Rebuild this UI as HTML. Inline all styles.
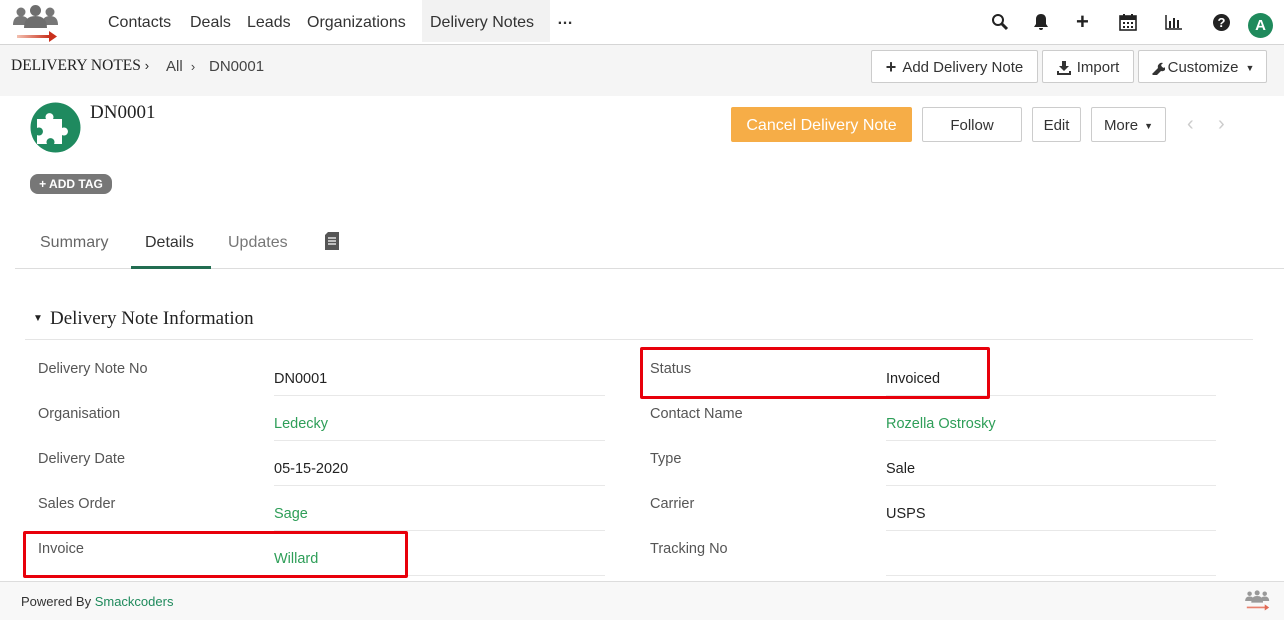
<!DOCTYPE html>
<html><head><meta charset="utf-8"><style>
*{margin:0;padding:0;box-sizing:border-box}
body{width:1284px;height:620px;position:relative;overflow:hidden;background:#fff;font-family:"Liberation Sans",sans-serif;color:#333}
.a{position:absolute;white-space:nowrap}
.nav{font-size:16px;color:#333;top:14px}
.btn{position:absolute;border:1px solid #ccc;border-radius:2px;background:#fff;font-size:15px;color:#333;display:flex;align-items:center;justify-content:center;gap:6px;padding-top:2px}
.lbl{font-size:14.5px;color:#555}
.val{font-size:14.5px;color:#222}
.g{color:#2e9e58}
.ln{position:absolute;height:1px;background:#e8e8e8}
.red{position:absolute;border:3px solid #e8000b;border-radius:2px}
.serif{font-family:"Liberation Serif",serif}
</style></head><body>
<div class="a" style="left:0;top:44px;width:1284px;height:1px;background:#d5d5d5"></div>
<svg class="a" style="left:12px;top:5px" width="50" height="38" viewBox="0 0 50 38">
<circle cx="9" cy="7" r="4.5" fill="#777"/><circle cx="38" cy="7" r="4.5" fill="#777"/><circle cx="23.5" cy="5.5" r="5.5" fill="#6e6e6e"/>
<path d="M1 20 q0-9 8-9 q8 0 8 9z M30 20 q0-9 8-9 q8 0 8 9z" fill="#777"/><path d="M12 23 q0-12 11.5-12 q11.5 0 11.5 12z" fill="#6e6e6e"/>
<defs><linearGradient id="gr" x1="0" x2="1"><stop offset="0" stop-color="#f3c0b0"/><stop offset="1" stop-color="#c9301c"/></linearGradient></defs>
<rect x="5" y="30" width="33" height="3" fill="url(#gr)"/><path d="M37 26 l8 5.5 l-8 5.5z" fill="#c9301c"/></svg>
<div class="a nav" style="left:108px">Contacts</div>
<div class="a nav" style="left:190px">Deals</div>
<div class="a nav" style="left:247px">Leads</div>
<div class="a nav" style="left:307px">Organizations</div>
<div class="a" style="left:422px;top:0;width:128px;height:42px;background:#f2f2f2"></div>
<div class="a nav" style="left:430px">Delivery Notes</div>
<div class="a" style="left:557px;top:11px;font-size:16px;font-weight:bold">…</div>
<svg class="a" style="left:991px;top:13px" width="18" height="18" viewBox="0 0 18 18"><circle cx="7" cy="7" r="5" fill="none" stroke="#222" stroke-width="2"/><path d="M11 11l5 5" stroke="#222" stroke-width="3"/></svg>
<svg class="a" style="left:1033px;top:13px" width="16" height="18" viewBox="0 0 16 18"><path d="M8 1c-3 0-5 2-5 5v5l-2 3h14l-2-3V6c0-3-2-5-5-5z M6 15h4a2 2 0 0 1-4 0z" fill="#222"/></svg>
<div class="a" style="left:1076px;top:9px;font-size:22px;font-weight:bold;color:#222">+</div>
<svg class="a" style="left:1119px;top:13px" width="18" height="18" viewBox="0 0 18 18"><rect x="1" y="3" width="16" height="14" fill="none" stroke="#222" stroke-width="1.6"/><rect x="1" y="3" width="16" height="4" fill="#222"/><path d="M5 1v4M13 1v4" stroke="#222" stroke-width="2"/><g fill="#222"><rect x="4" y="9" width="2" height="2"/><rect x="8" y="9" width="2" height="2"/><rect x="12" y="9" width="2" height="2"/><rect x="4" y="13" width="2" height="2"/><rect x="8" y="13" width="2" height="2"/><rect x="12" y="13" width="2" height="2"/></g></svg>
<svg class="a" style="left:1165px;top:14px" width="18" height="16" viewBox="0 0 18 16"><path d="M1 1v14h16" stroke="#222" stroke-width="1.5" fill="none"/><g fill="#222"><rect x="4" y="7" width="2" height="7"/><rect x="8" y="4" width="2" height="10"/><rect x="12" y="6" width="2" height="8"/></g></svg>
<div class="a" style="left:1213px;top:14px;width:17px;height:17px;border-radius:50%;background:#222;color:#fff;font-size:13px;font-weight:bold;text-align:center;line-height:17px">?</div>
<div class="a" style="left:1248px;top:13px;width:25px;height:25px;border-radius:50%;background:#1f8a5c;color:#fff;font-size:15px;font-weight:bold;text-align:center;line-height:25px">A</div>
<div class="a" style="left:0;top:45px;width:1284px;height:51px;background:#f5f5f5"></div>
<div class="a serif" style="left:11px;top:57px;font-size:15.5px;color:#222">DELIVERY NOTES <span style="font-family:'Liberation Sans';font-size:13px">›</span></div>
<div class="a" style="left:166px;top:58px;font-size:15px;color:#444">All <span style="font-size:13px;margin-left:4px">›</span></div>
<div class="a" style="left:209px;top:58px;font-size:15px;color:#444">DN0001</div>
<div class="btn" style="left:871px;top:50px;width:167px;height:33px"><b style="font-size:18px">+</b>Add Delivery Note</div>
<div class="btn" style="left:1042px;top:50px;width:92px;height:33px"><svg width="14" height="14" viewBox="0 0 14 14"><path d="M5 0h4v5h3l-5 5-5-5h3z M0 10h2v2h10v-2h2v4H0z" fill="#333"/></svg>Import</div>
<div class="btn" style="left:1138px;top:50px;width:129px;height:33px;gap:3px"><svg width="14" height="14" viewBox="0 0 14 14"><path d="M1 13l6-6a4 4 0 0 1 5-5l-2 2 1 2 2 1 2-2a4 4 0 0 1-5 5l-6 6z" fill="#333"/></svg>Customize <span style="font-size:9px;margin-left:4px">▼</span></div>
<svg class="a" style="left:30px;top:102px" width="51" height="51" viewBox="0 0 51 51"><circle cx="25.5" cy="25.5" r="25" fill="#1f8a5f"/><path d="M7 17h9a4 4 0 1 1 7 0h9v9a4 4 0 1 1 0 7v9h-8a4 4 0 1 0-7 0H7v-9a4 4 0 1 0 0-7z" fill="#fff"/></svg>
<div class="a serif" style="left:90px;top:102px;font-size:19px;color:#222">DN0001</div>
<div class="a" style="left:30px;top:174px;width:82px;height:20px;border-radius:8px;background:#777;color:#fff;font-size:12px;font-weight:bold;text-align:center;line-height:20px">+ ADD TAG</div>
<div class="btn" style="left:731px;top:107px;width:181px;height:35px;background:#f6ad47;border-color:#f6ad47;color:#fff;font-size:16px">Cancel Delivery Note</div>
<div class="btn" style="left:922px;top:107px;width:100px;height:35px">Follow</div>
<div class="btn" style="left:1032px;top:107px;width:49px;height:35px">Edit</div>
<div class="btn" style="left:1091px;top:107px;width:75px;height:35px">More <span style="font-size:9px">▼</span></div>
<div class="a" style="left:1187px;top:113px;font-size:20px;color:#ccc">‹</div>
<div class="a" style="left:1218px;top:113px;font-size:20px;color:#ccc">›</div>
<div class="a" style="left:40px;top:234px;font-size:16px;color:#666">Summary</div>
<div class="a" style="left:145px;top:234px;font-size:16px;color:#333">Details</div>
<div class="a" style="left:228px;top:234px;font-size:16px;color:#777">Updates</div>
<svg class="a" style="left:325px;top:232px" width="14" height="18" viewBox="0 0 14 18"><path d="M0 3l3-3h11v18H0z" fill="#555"/><path d="M3 6h8M3 9h8M3 12h8" stroke="#fff" stroke-width="1.3"/></svg>
<div class="a" style="left:15px;top:268px;width:1269px;height:1px;background:#ddd"></div>
<div class="a" style="left:131px;top:266px;width:80px;height:3px;background:#226d51"></div>
<div class="a" style="left:33px;top:313px;font-size:10px;color:#222">▼</div>
<div class="a serif" style="left:50px;top:308px;font-size:19px;color:#222">Delivery Note Information</div>
<div class="ln" style="left:25px;top:339px;width:1228px;background:#e5e5e5"></div>
<div class="a lbl" style="left:38px;top:361px">Delivery Note No</div><div class="a val" style="left:274px;top:371px">DN0001</div><div class="ln" style="left:274px;top:395px;width:331px"></div>
<div class="a lbl" style="left:38px;top:406px">Organisation</div><div class="a val g" style="left:274px;top:416px">Ledecky</div><div class="ln" style="left:274px;top:440px;width:331px"></div>
<div class="a lbl" style="left:38px;top:451px">Delivery Date</div><div class="a val" style="left:274px;top:461px">05-15-2020</div><div class="ln" style="left:274px;top:485px;width:331px"></div>
<div class="a lbl" style="left:38px;top:496px">Sales Order</div><div class="a val g" style="left:274px;top:506px">Sage</div><div class="ln" style="left:274px;top:530px;width:331px"></div>
<div class="a lbl" style="left:38px;top:541px">Invoice</div><div class="a val g" style="left:274px;top:551px">Willard</div><div class="ln" style="left:274px;top:575px;width:331px"></div>
<div class="a lbl" style="left:650px;top:361px">Status</div><div class="a val" style="left:886px;top:371px">Invoiced</div><div class="ln" style="left:886px;top:395px;width:330px"></div>
<div class="a lbl" style="left:650px;top:406px">Contact Name</div><div class="a val g" style="left:886px;top:416px">Rozella Ostrosky</div><div class="ln" style="left:886px;top:440px;width:330px"></div>
<div class="a lbl" style="left:650px;top:451px">Type</div><div class="a val" style="left:886px;top:461px">Sale</div><div class="ln" style="left:886px;top:485px;width:330px"></div>
<div class="a lbl" style="left:650px;top:496px">Carrier</div><div class="a val" style="left:886px;top:506px">USPS</div><div class="ln" style="left:886px;top:530px;width:330px"></div>
<div class="a lbl" style="left:650px;top:541px">Tracking No</div><div class="ln" style="left:886px;top:575px;width:330px"></div>
<div class="red" style="left:640px;top:347px;width:350px;height:52px"></div>
<div class="red" style="left:23px;top:531px;width:385px;height:47px"></div>
<div class="a" style="left:0;top:581px;width:1284px;height:39px;background:#f8f8f8;border-top:1px solid #ddd"></div>
<div class="a" style="left:21px;top:594px;font-size:13px;color:#333">Powered By <span style="color:#1f8a5c">Smackcoders</span></div>
<svg class="a" style="left:1244px;top:588px" width="28" height="26" viewBox="0 0 50 38"><circle cx="10" cy="6" r="4" fill="#999"/><circle cx="37" cy="6" r="4" fill="#999"/><circle cx="23.5" cy="4.5" r="4.5" fill="#999"/><path d="M2 19 q0-8 8-8 q8 0 8 8z M29 19 q0-8 8-8 q8 0 8 8z M13 22 q0-12 10.5-12 q10.5 0 10.5 12z" fill="#999"/><rect x="5" y="29" width="33" height="3" fill="#e8826f"/><path d="M37 25 l8 5.5 l-8 5.5z" fill="#e06a55"/></svg>
</body></html>
